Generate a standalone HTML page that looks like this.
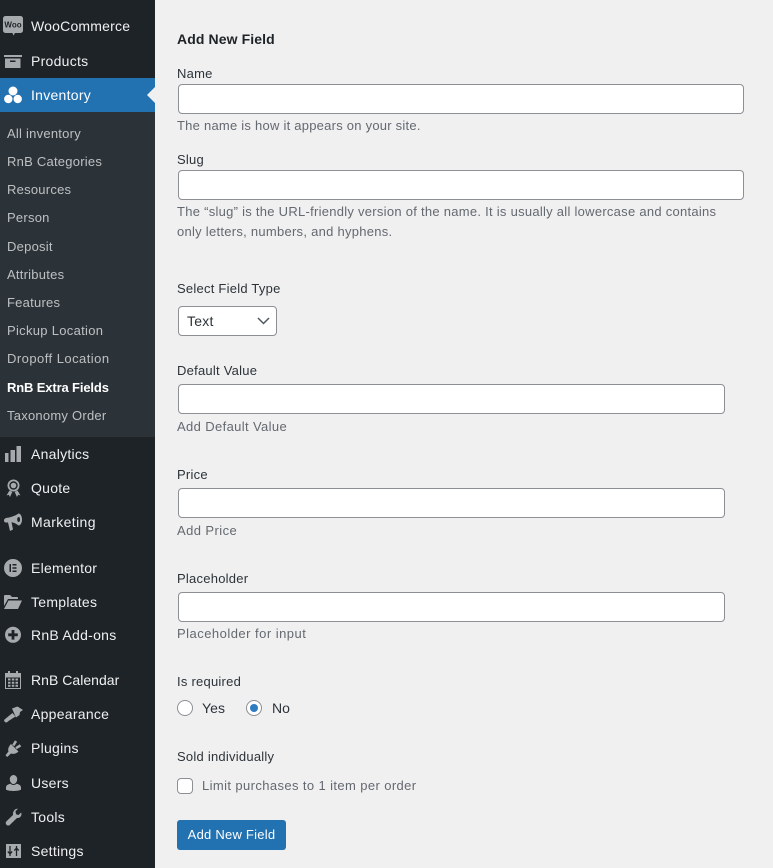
<!DOCTYPE html>
<html><head><meta charset="utf-8"><style>
html,body{margin:0;padding:0;background:#f0f0f1}
body{width:773px;height:868px;position:relative;overflow:hidden;font-family:"Liberation Sans",sans-serif;font-size:13px;color:#3c434a}
#side{position:absolute;left:0;top:0;width:155px;height:868px;background:#1d2327}
#sub{position:absolute;left:0;top:112px;width:155px;height:325px;background:#2c3338}
#cur{position:absolute;left:0;top:78px;width:155px;height:34px;background:#2271b1}
.arrow{position:absolute;left:147px;top:87px;width:0;height:0;border:8px solid transparent;border-left:0;border-right:8px solid #f0f0f1}
.m,.s,.t{position:absolute;white-space:nowrap;line-height:18px}
.m{left:31px;font-size:14px;color:#f0f0f1;letter-spacing:.27px}
.s{left:7px;font-size:13px;color:#bdc0c3;letter-spacing:.24px}
.t{left:177px;font-size:13px;letter-spacing:.24px;color:#2c3338}
.d{color:#646970}
.i{position:absolute;left:178px;height:28px;box-sizing:border-box;border:1px solid #8c8f94;border-radius:4px;background:#fff}
svg{position:absolute;fill:#a7aaad}
</style></head><body>
<div id="side"></div><div id="sub"></div><div id="cur"></div><div class="arrow"></div>

<svg style="left:3px;top:16px" width="20" height="20" viewBox="0 0 20 20"><path d="M2.500 0h15A2.500 2.500 0 0 1 20 2.500v12a2.500 2.500 0 0 1-2.500 2.500H12l-1.500 2.500L9.500 17h-7A2.500 2.500 0 0 1 0 14.500v-12A2.500 2.500 0 0 1 2.500 0z"/><text x="10" y="11.500" font-size="8" font-weight="bold" text-anchor="middle" fill="#1d2327" style="font-family:'Liberation Sans',sans-serif">Woo</text></svg>
<svg style="left:4px;top:55px" width="18" height="14" viewBox="0 0 18 14"><path fill-rule="evenodd" d="M0 0h18v2H0zM1 3.500h15.500V13H1zM6 5.500V7h5.500V5.500z"/></svg>
<svg style="left:4px;top:86px" width="18" height="18" viewBox="0 0 18 18"><circle cx="9" cy="5" r="4.500" style="fill:#fff"/><circle cx="4.300" cy="13" r="4.200" style="fill:#fff"/><circle cx="13.700" cy="13" r="4.200" style="fill:#fff"/></svg>
<svg style="left:5px;top:446px" width="16" height="16" viewBox="0 0 16 16"><path d="M0 7h3.500v9H0zM5.500 4h4.500v12H5.500zM11.500 0H16v16h-4.500z"/></svg>
<svg style="left:6px;top:479px" width="15" height="18" viewBox="0 0 15 18"><path fill-rule="evenodd" d="M7.500 .5a6 6 0 1 1 0 12a6 6 0 0 1 0-12zm0 1.800a4.200 4.200 0 1 0 0 8.400a4.200 4.200 0 0 0 0-8.400z"/><circle cx="7.500" cy="6.500" r="2.800"/><path d="M3.500 11.500l2.800 1.500L4 18l-1.300-2.200L.5 16.500zM11.500 11.500L8.700 13 11 18l1.300-2.200 2.200.7z"/></svg>
<svg style="left:4px;top:513px" width="18" height="18" viewBox="0 0 18 18"><path fill-rule="evenodd" d="M14.500 .5c2 0 3.500 2.700 3.500 6s-1.500 6-3.500 6c-2.500-2-4.500-3-7-3.300L9 16.500 6 18 4 9.500H2a2 2 0 0 1-2-2c0-1.500 1-2 2-2.500C6 4.500 11 3 14.500 .5zm.200 3.500c-1 0-1.500 1.200-1.500 2.500S13.700 9 14.700 9s1.300-1.200 1.300-2.500S15.700 4 14.700 4z"/></svg>
<svg style="left:4px;top:559px" width="18" height="18" viewBox="0 0 18 18"><path fill-rule="evenodd" d="M9 0a9 9 0 1 1 0 18A9 9 0 0 1 9 0zM5.500 5v8H7V5zM8.500 5v1.500h4V5zM8.500 8.200v1.500h4V8.200zM8.500 11.500V13h4v-1.500z"/></svg>
<svg style="left:4px;top:594px" width="18" height="15" viewBox="0 0 18 15"><path d="M0 2a1 1 0 0 1 1-1h5l2 2h5a1 1 0 0 1 1 1v1H4L0 12zM4.500 6.500H18L14 15H0z"/></svg>
<svg style="left:4px;top:626px" width="18" height="18" viewBox="0 0 18 18"><path fill-rule="evenodd" d="M9 .8a8 8 0 1 1 0 16a8 8 0 0 1 0-16zM7.600 4v3.400H4.200v2.800h3.400v3.400h2.800v-3.400h3.400V7.400h-3.400V4z"/></svg>
<svg style="left:5px;top:671px" width="16" height="18" viewBox="0 0 16 18"><path fill-rule="evenodd" d="M3 0h2v2h6V0h2v2h3v16H0V2h3zM1 6.500V17h14V6.500zM3 7.500h2.500v2H3zM6.800 7.500h2.500v2H6.800zM10.500 7.500H13v2h-2.500zM3 10.700h2.500v2H3zM6.800 10.700h2.500v2H6.800zM10.500 10.700H13v2h-2.500zM3 13.800h2.500v2H3zM6.800 13.800h2.500v2H6.800zM10.500 13.800H13v2h-2.500z"/></svg>
<svg style="left:4px;top:705px" width="19" height="18" viewBox="0 0 19 18"><path d="M8 3.500L13.500 1.500 19 5l-3 2-.5 3-3.500 2.500zM8.500 8l3 3.500-7 4.500C3 17.500 2 18 1 17S-.2 15.500.8 14.300z"/></svg>
<svg style="left:5px;top:739px" width="17" height="18" viewBox="0 0 17 18"><path d="M6 5l7.500 7.500c-2 2-5 3-7.500 2L2.200 18 .5 16.200 3.500 12.500C2.500 10 4 7 6 5z"/><path d="M8.300 6.500L11 2M11 9.200l4.500-2.800" fill="none" stroke="#a7aaad" stroke-width="2.600"/></svg>
<svg style="left:6px;top:775px" width="15" height="16" viewBox="0 0 15 16"><path d="M7.500 0c2 0 3.700 1.800 3.700 4.200S9.500 9 7.500 9 3.800 6.600 3.800 4.200 5.500 0 7.500 0zM0 12.500C0 10.500 2 9.300 4.500 8.800 5.500 9.700 6.500 10 7.500 10s2-.3 3-1.200c2.500.5 4.500 1.700 4.500 3.700v2.300c-2.500 1-5 1.200-7.500 1.200S2.500 15.800 0 14.800z"/></svg>
<svg style="left:5px;top:808px" width="17" height="18" viewBox="0 0 17 18"><path d="M13 .8l-2.500 2.500.5 3 2.500.7L16.200 4.500c1 3.200-1.200 6-4.200 5.500L5 16.800c-1 1-2.500 1-3.500 0s-1-2.500 0-3.500L8 7C7.500 3.500 10 .3 13 .8z"/></svg>
<svg style="left:6px;top:844px" width="15" height="14" viewBox="0 0 15 14"><path d="M0 0h15v14H0z"/><path d="M4 2v10M1.800 7.500L4 9.800 6.200 7.500M10.500 12V2M8.300 6.500L10.500 4.200 12.700 6.500" fill="none" stroke="#1d2327" stroke-width="1.300"/></svg>

<div class="m" style="top:17px;letter-spacing:.2px">WooCommerce</div>
<div class="m" style="top:52px">Products</div>
<div class="m" style="top:86px;color:#fff">Inventory</div>
<div class="s" style="top:125px">All inventory</div>
<div class="s" style="top:153px">RnB Categories</div>
<div class="s" style="top:181px">Resources</div>
<div class="s" style="top:209px">Person</div>
<div class="s" style="top:238px">Deposit</div>
<div class="s" style="top:266px">Attributes</div>
<div class="s" style="top:294px">Features</div>
<div class="s" style="top:322px;letter-spacing:.3px">Pickup Location</div>
<div class="s" style="top:350px;letter-spacing:.46px">Dropoff Location</div>
<div class="s" style="top:379px;color:#fff;font-weight:bold;letter-spacing:-.14px">RnB Extra Fields</div>
<div class="s" style="top:407px">Taxonomy Order</div>
<div class="m" style="top:445px">Analytics</div>
<div class="m" style="top:479px">Quote</div>
<div class="m" style="top:513px;letter-spacing:.38px">Marketing</div>
<div class="m" style="top:559px">Elementor</div>
<div class="m" style="top:593px">Templates</div>
<div class="m" style="top:626px">RnB Add-ons</div>
<div class="m" style="top:671px;letter-spacing:.03px">RnB Calendar</div>
<div class="m" style="top:705px">Appearance</div>
<div class="m" style="top:739px">Plugins</div>
<div class="m" style="top:774px">Users</div>
<div class="m" style="top:808px">Tools</div>
<div class="m" style="top:842px">Settings</div>

<div class="t" style="top:30px;font-weight:bold;font-size:14px;letter-spacing:.1px;color:#1d2327">Add New Field</div>
<div class="t" style="top:65px">Name</div>
<div class="i" style="top:84px;width:566px;height:30px"></div>
<div class="t d" style="top:117px">The name is how it appears on your site.</div>
<div class="t" style="top:151px">Slug</div>
<div class="i" style="top:170px;width:566px;height:30px"></div>
<div class="t d" style="top:203px;letter-spacing:.27px">The “slug” is the URL-friendly version of the name. It is usually all lowercase and contains</div>
<div class="t d" style="top:223px;letter-spacing:.27px">only letters, numbers, and hyphens.</div>
<div class="t" style="top:280px">Select Field Type</div>
<div class="i" style="top:306px;left:178px;width:99px;height:30px"></div>
<div class="t" style="top:312px;left:187px;font-size:14px">Text</div>
<svg style="left:257px;top:317px;fill:none" width="13" height="8" viewBox="0 0 13 8"><path d="M1 1l5.500 5.500L12 1" fill="none" stroke="#50575e" stroke-width="1.500"/></svg>
<div class="t" style="top:362px">Default Value</div>
<div class="i" style="top:384px;width:547px;height:30px"></div>
<div class="t d" style="top:418px;letter-spacing:.37px">Add Default Value</div>
<div class="t" style="top:466px">Price</div>
<div class="i" style="top:488px;width:547px;height:30px"></div>
<div class="t d" style="top:522px;letter-spacing:.42px">Add Price</div>
<div class="t" style="top:570px">Placeholder</div>
<div class="i" style="top:592px;width:547px;height:30px"></div>
<div class="t d" style="top:625px;letter-spacing:.48px">Placeholder for input</div>
<div class="t" style="top:673px">Is required</div>
<div class="i" style="left:177px;top:700px;width:16px;height:16px;border-radius:50%"></div>
<div class="t" style="top:699px;left:202px;font-size:14px;letter-spacing:.1px">Yes</div>
<div class="i" style="left:246px;top:700px;width:16px;height:16px;border-radius:50%"></div>
<div style="position:absolute;left:250px;top:704px;width:8px;height:8px;border-radius:50%;background:#2f7cc0"></div>
<div class="t" style="top:699px;left:272px;font-size:14px;letter-spacing:0">No</div>
<div class="t" style="top:748px">Sold individually</div>
<div class="i" style="left:177px;top:778px;width:16px;height:16px"></div>
<div class="t d" style="top:777px;left:202px;letter-spacing:.39px">Limit purchases to 1 item per order</div>
<div style="position:absolute;left:177px;top:820px;width:109px;height:30px;background:#2271b1;border-radius:3px;color:#fff;font-size:13px;line-height:30px;text-align:center;letter-spacing:.24px">Add New Field</div>
</body></html>
